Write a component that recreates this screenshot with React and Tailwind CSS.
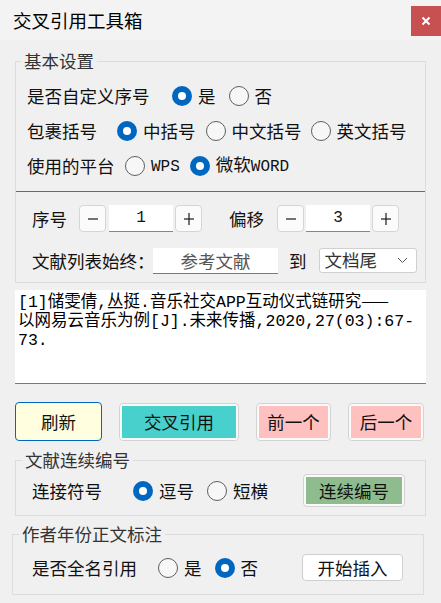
import React from 'react';

const Radio = ({ checked, label, className = '' }) => (
  <div className={`flex items-center ${className}`}>
    {checked ? (
      <span className="w-[20px] h-[20px] rounded-full bg-[#0067c0] flex items-center justify-center shrink-0">
        <span className="w-[8px] h-[8px] rounded-full bg-white" />
      </span>
    ) : (
      <span className="w-[20px] h-[20px] rounded-full border border-[#5f5f5f] bg-[#f7f7f7] shrink-0" />
    )}
    <span className="ml-[6px] whitespace-nowrap">{label}</span>
  </div>
);

const Mono = ({ children }) => (
  <span className="font-['Liberation_Mono',monospace] text-[16px]">{children}</span>
);

const SpinBtn = ({ plus }) => (
  <div className="w-[27px] h-[27px] rounded-[4px] border border-[#d5d5d5] bg-[#fbfbfb] flex items-center justify-center shrink-0">
    <svg width="16" height="16" viewBox="0 0 16 16">
      <line x1="3" y1="8" x2="13" y2="8" stroke="#1a1a1a" strokeWidth="1.2" />
      {plus && <line x1="8" y1="2" x2="8" y2="14" stroke="#1a1a1a" strokeWidth="1.2" />}
    </svg>
  </div>
);

const NumBox = ({ value }) => (
  <div className="w-[64px] h-[27px] bg-white border-b border-[#868686] flex items-center justify-center shrink-0 font-['Liberation_Mono',monospace] text-[16px]">
    {value}
  </div>
);

const ColorBtn = ({ width, color, children }) => (
  <div className={`${width} h-[38px] mt-[1px] rounded-[4px] border border-[#d3d3d3] bg-[#fafafa] p-[2px]`}>
    <div className={`${color} h-full flex items-center justify-center`}>{children}</div>
  </div>
);

export default function App() {
  return (
    <div className="w-[441px] h-[603px] bg-[#f0f0f0] text-[17.5px] leading-[20px] text-[#111] font-['Noto_Sans_CJK_SC',sans-serif] overflow-hidden">
      {/* title bar */}
      <div className="h-[40px] bg-[#f3f3f3] flex items-start justify-between">
        <div className="pl-[13px] pt-[9px] text-[18.5px] leading-[22px] text-black">交叉引用工具箱</div>
        <div className="mt-[6px] w-[30px] h-[30px] bg-[#c75050] flex items-center justify-center">
          <svg width="10" height="10" viewBox="0 0 10 10">
            <path d="M1.5 1.5 L8.5 8.5 M8.5 1.5 L1.5 8.5" stroke="white" strokeWidth="2" />
          </svg>
        </div>
      </div>

      {/* 基本设置 */}
      <fieldset className="mx-[15px] mt-[11px] border border-[#dcdcdc]">
        <legend className="ml-[5px] px-[3px] leading-[20px] text-[#333]">基本设置</legend>
        <div className="pt-[7px] pl-[11px]">
          <div className="h-[35px] flex items-center">
            <span className="w-[145px]">是否自定义序号</span>
            <Radio checked label="是" />
            <Radio label="否" className="ml-[13px]" />
          </div>
          <div className="h-[35px] flex items-center">
            <span className="w-[90px]">包裹括号</span>
            <Radio checked label="中括号" />
            <Radio label="中文括号" className="ml-[10px]" />
            <Radio label="英文括号" className="ml-[9px]" />
          </div>
          <div className="h-[35px] flex items-center">
            <span className="w-[98px]">使用的平台</span>
            <Radio label={<Mono>WPS</Mono>} />
            <Radio checked label={<>微软<Mono>WORD</Mono></>} className="ml-[10px]" />
          </div>
        </div>
        <div className="mt-[8px] border-t border-[#6a6a6a] pt-[13px] pb-[8px] pl-[16px]">
          <div className="h-[27px] flex items-center">
            <span className="w-[47px]">序号</span>
            <SpinBtn />
            <div className="ml-[3px]"><NumBox value="1" /></div>
            <div className="ml-[2px]"><SpinBtn plus /></div>
            <span className="ml-[27px] w-[48px]">偏移</span>
            <SpinBtn />
            <div className="ml-[2px]"><NumBox value="3" /></div>
            <div className="ml-[2px]"><SpinBtn plus /></div>
          </div>
          <div className="mt-[15px] h-[27px] flex items-center">
            <span className="w-[121px] whitespace-nowrap">文献列表始终：</span>
            <div className="w-[125px] h-[26px] mt-[1px] bg-white border-b border-[#7a7a7a] flex items-center justify-center text-[#555]">
              参考文献
            </div>
            <span className="ml-[11px]">到</span>
            <div className="ml-[12px] w-[98px] h-[25px] mb-[1px] bg-white border border-[#d0d0d0] rounded-[3px] flex items-center justify-between pl-[5px] pr-[8px] text-[#333]">
              <span>文档尾</span>
              <svg width="11" height="7" viewBox="0 0 11 7">
                <path d="M1 1 L5.5 5.5 L10 1" fill="none" stroke="#555" strokeWidth="1" />
              </svg>
            </div>
          </div>
        </div>
      </fieldset>

      {/* reference text */}
      <div className="mx-[15px] mt-[7px] h-[94px] bg-white border-b border-[#7a7a7a] pl-[3px] pt-[1px] font-['Liberation_Mono','Noto_Sans_CJK_SC',monospace] text-[16.5px] leading-[19px] text-black whitespace-nowrap">
        <div>
          [1]储雯倩,丛挺.音乐社交APP互动仪式链研究
          <span className="font-['Noto_Sans_CJK_SC',sans-serif]">——</span>
        </div>
        <div>以网易云音乐为例[J].未来传播,2020,27(03):67-</div>
        <div>73.</div>
      </div>

      {/* action buttons */}
      <div className="mx-[15px] mt-[18px] flex items-start gap-[17px]">
        <div className="w-[87px] h-[39px] bg-[#ffffe0] border border-[#0067c0] rounded-[4px] flex items-center justify-center">刷新</div>
        <ColorBtn width="w-[120px]" color="bg-[#48d1cc]">交叉引用</ColorBtn>
        <ColorBtn width="w-[75px]" color="bg-[#ffc0c0]">前一个</ColorBtn>
        <ColorBtn width="w-[76px]" color="bg-[#ffc0c0]">后一个</ColorBtn>
      </div>

      {/* 文献连续编号 */}
      <fieldset className="mx-[15px] mt-[9px] border border-[#dcdcdc]">
        <legend className="ml-[6px] px-[3px] leading-[20px] text-[#333]">文献连续编号</legend>
        <div className="pt-[4px] pb-[8px] pl-[16px]">
          <div className="h-[33px] flex items-center">
            <span className="w-[101px]">连接符号</span>
            <Radio checked label="逗号" />
            <Radio label="短横" className="ml-[13px]" />
            <div className="ml-[35px] w-[102px] h-[33px] rounded-[4px] border border-[#d3d3d3] bg-[#fafafa] p-[2px]">
              <div className="bg-[#8fbc8f] h-full flex items-center justify-center">连续编号</div>
            </div>
          </div>
        </div>
      </fieldset>

      {/* 作者年份正文标注 */}
      <fieldset className="ml-[12px] w-[412px] mt-[8px] border border-[#dcdcdc]">
        <legend className="ml-[6px] px-[3px] leading-[20px] text-[#333]">作者年份正文标注</legend>
        <div className="pt-[10px] pb-[13px] pl-[19px]">
          <div className="h-[27px] flex items-center">
            <span className="w-[126px]">是否全名引用</span>
            <Radio label="是" />
            <Radio checked label="否" className="ml-[13px]" />
            <div className="ml-[44px] w-[101px] h-[27px] bg-white border border-[#cfcfcf] rounded-[4px] flex items-center justify-center">
              开始插入
            </div>
          </div>
        </div>
      </fieldset>
    </div>
  );
}
